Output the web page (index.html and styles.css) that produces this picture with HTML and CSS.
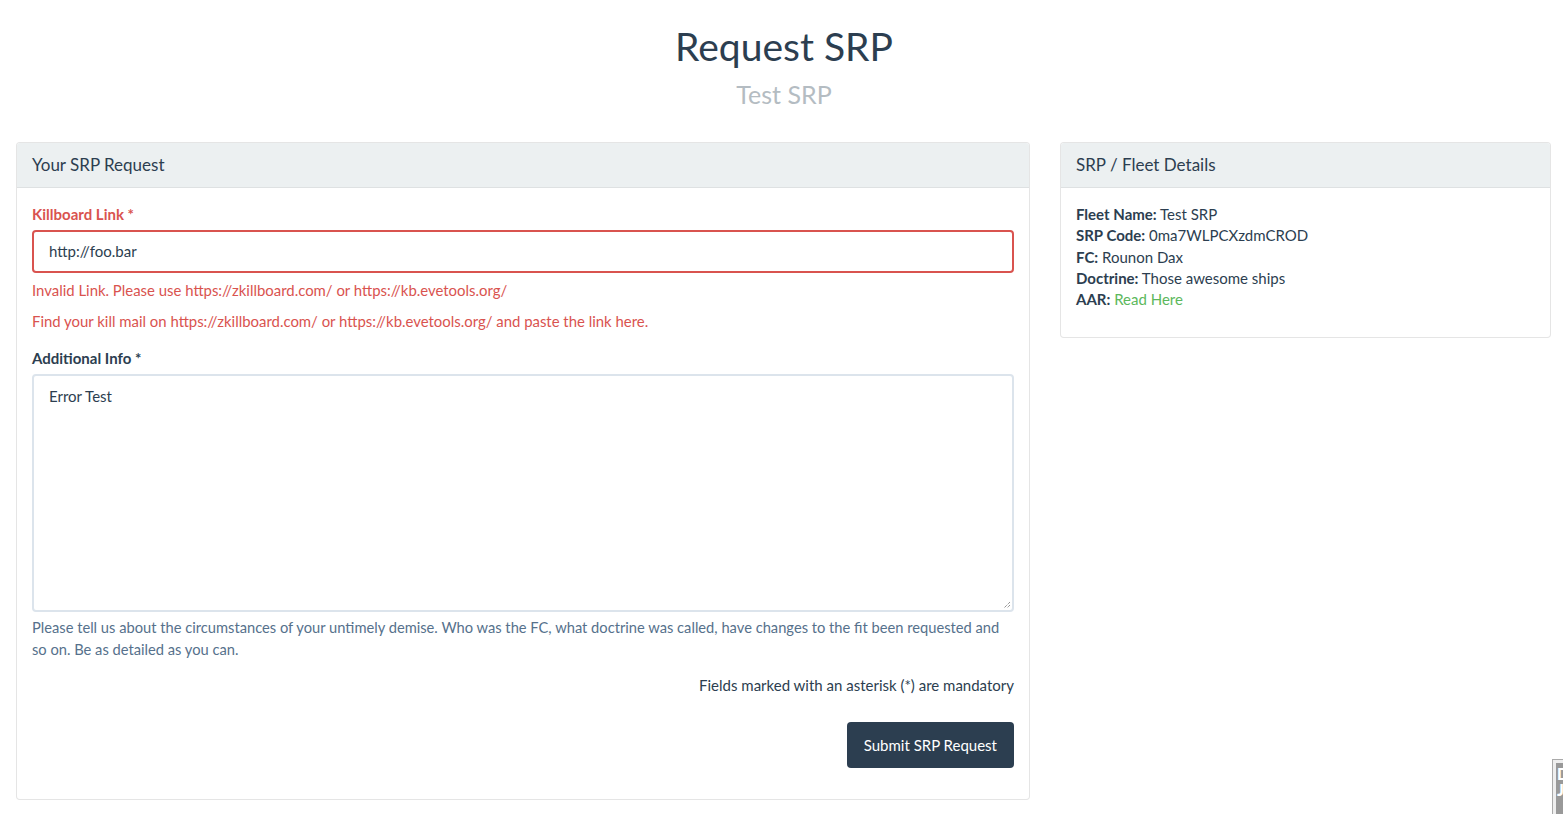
FILE: index.html
```html
<!DOCTYPE html>
<html lang="en">
<head>
<meta charset="utf-8">
<title>Request SRP</title>
<link rel="stylesheet" href="styles.css">
</head>
<body>
<header class="page-head">
  <h1 class="title">Request SRP</h1>
  <div class="subtitle">Test SRP</div>
</header>
<main class="row">
  <section class="card card-main">
    <div class="card-header">Your SRP Request</div>
    <div class="card-body">
      <div class="field">
        <label class="label label-error">Killboard Link *</label>
        <div class="input input-error">http://foo.bar</div>
        <div class="error-msg">Invalid Link. Please use https://zkillboard.com/ or https://kb.evetools.org/</div>
        <div class="help help-error">Find your kill mail on https://zkillboard.com/ or https://kb.evetools.org/ and paste the link here.</div>
      </div>
      <div class="field field-last">
        <label class="label">Additional Info *</label>
        <div class="textarea">Error Test
          <svg class="grip" width="9" height="9" viewBox="0 0 9 9"><path d="M8 2 L2 8 M8 5 L5 8" stroke="#666" stroke-width="1" stroke-dasharray="1 1"/></svg>
        </div>
        <div class="help help-info">Please tell us about the circumstances of your untimely demise. Who was the FC, what doctrine was called, have changes to the fit been requested and so on. Be as detailed as you can.</div>
      </div>
      <div class="mandatory">Fields marked with an asterisk (*) are mandatory</div>
      <div class="actions"><button class="btn">Submit SRP Request</button></div>
    </div>
  </section>
  <aside class="card card-side">
    <div class="card-header">SRP / Fleet Details</div>
    <div class="card-body details">
      <div><b>Fleet Name:</b> Test SRP</div>
      <div><b>SRP Code:</b> 0ma7WLPCXzdmCROD</div>
      <div><b>FC:</b> Rounon Dax</div>
      <div><b>Doctrine:</b> Those awesome ships</div>
      <div><b>AAR:</b> <a class="link" href="#">Read Here</a></div>
    </div>
  </aside>
</main>
<div class="djdt"><span>D</span><span>J</span></div>
</body>
</html>
```
FILE: styles.css
```css
html, body {
  margin: 0;
  padding: 0;
  background: #fff;
  font-family: Lato, "Noto Sans", sans-serif;
  color: #2c3e50;
  font-size: 15px;
  line-height: 1.42;
}
.page-head {
  text-align: center;
  padding: 20px 0 0 5px;
}
.title {
  margin: 0;
  font-size: 39px;
  font-weight: 400;
  line-height: 52px;
  color: #2c3e50;
}
.subtitle {
  font-size: 25px;
  color: #b4bcc2;
  line-height: 34px;
  margin-top: 5px;
}
.row {
  display: flex;
  align-items: flex-start;
  gap: 30px;
  padding: 0 0 0 16px;
  margin-top: 31px;
}
.card {
  box-sizing: border-box;
  flex: none;
  border: 1px solid rgba(0,0,0,0.1);
  border-radius: 4px;
  background: #fff;
  overflow: hidden;
}
.card-main { width: 1014px; }
.card-side { width: 491px; }
.card-header {
  background: #ecf0f1;
  height: 45px;
  line-height: 44px;
  padding: 0 15px;
  font-size: 17px;
  color: #2c3e50;
  border-bottom: 1px solid rgba(0,0,0,0.06);
  box-sizing: border-box;
}
.card-body {
  padding: 17px 15px 31px 15px;
}
.field { margin-bottom: 17px; }
.field-last { margin-bottom: 0; }
.label {
  display: block;
  font-weight: 700;
  margin-top: -1px;
  margin-bottom: 6px;
  line-height: 20px;
}
.label-error { color: #d9534f; }
.input {
  height: 43px;
  box-sizing: border-box;
  border: 2px solid #dce4ec;
  border-radius: 4px;
  padding: 0 15px;
  line-height: 39px;
}
.input-error { border-color: #d9534f; }
.error-msg {
  color: #d9534f;
  margin-top: 6px;
  line-height: 22px;
  font-size: 14.92px;
}
.help {
  margin-top: 9px;
  line-height: 22px;
}
.help-error { color: #d9534f; font-size: 14.92px; }
.help-info { color: #56718c; margin-top: 4px; font-size: 14.7px; }
.textarea {
  position: relative;
  height: 238px;
  box-sizing: border-box;
  border: 2px solid #dce4ec;
  border-radius: 4px;
  padding: 9px 15px;
  line-height: 22px;
}
.grip {
  position: absolute;
  right: 1px;
  bottom: 1px;
}
.mandatory {
  text-align: right;
  margin-top: 14px;
  line-height: 22px;
}
.actions {
  display: flex;
  justify-content: flex-end;
  margin-top: 26px;
}
.btn {
  font-family: inherit;
  font-size: 15px;
  background: #2c3e50;
  color: #fff;
  border: none;
  border-radius: 4px;
  height: 46px;
  padding: 0 17px;
}
.details {
  padding: 16px 15px 26px;
  line-height: 21.35px;
}
.details b { font-weight: 700; }
.link { color: #5cb85c; text-decoration: none; }
.djdt {
  position: fixed;
  right: -10px;
  top: 760px;
  width: 20px;
  height: 60px;
  background: #999;
  border: 3px solid #eee;
  outline: 1px solid #aaa;
  color: #fff;
  font-weight: 900;
  font-size: 16px;
  line-height: 16px;
  padding: 3px 1px;
  box-sizing: border-box;
  display: flex;
  flex-direction: column;
}
```
